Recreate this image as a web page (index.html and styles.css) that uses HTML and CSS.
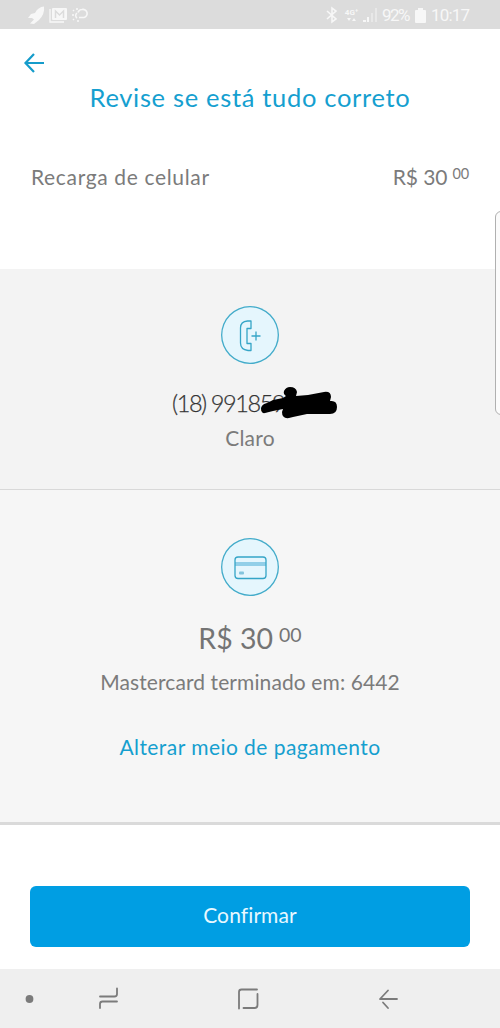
FILE: index.html
```html
<!DOCTYPE html>
<html lang="pt-BR">
<head>
<meta charset="utf-8">
<title>Recarga de celular</title>
<link rel="stylesheet" href="styles.css">
</head>
<body>
<div class="screen">
  <div class="status">
    <svg class="status-left" width="64" height="20" viewBox="0 0 64 20">
      <path d="M16 1.500Q10 2 7 8L3 9 0 13h4l2 1.500-4 4 4 .5 5-4Q17 9 16 1.500Z" fill="currentColor"/>
      <path d="M22 4v13h14" fill="none" stroke="currentColor" stroke-width="1.300"/>
      <rect x="24" y="3" width="15" height="12" rx="1" fill="currentColor"/>
      <path d="M27.500 13V6l4 4 4-4v7" fill="none" stroke="#dcdcdc" stroke-width="1.500"/>
      <path d="M51 12.500h5a4 4 0 1 0-2-8q-3 0-4 3" fill="none" stroke="currentColor" stroke-width="1.600"/>
      <path d="M49 8a3 3 0 0 0 0 5M45 5l1 1M49 3v2M44 10h2M45 15l1-1M50 15v2" fill="none" stroke="currentColor" stroke-width="1.500"/>
    </svg>
    <div class="status-right">
      <svg width="12" height="18" viewBox="0 0 12 18"><path d="M1 5l9 8-4 3V2l4 3-9 8" fill="none" stroke="currentColor" stroke-width="1.600"/></svg>
      <div class="network"><span>4G⁺</span><svg width="9" height="5" viewBox="0 0 9 5"><path d="M0 1h4L2 4ZM5 4h4L7 1Z" fill="currentColor"/></svg></div>
      <svg class="signal" width="14" height="16" viewBox="0 0 14 16"><path d="M0 13h3v2H0ZM4 10h2v5H4Z" fill="currentColor"/><path d="M8 6h2v9H8ZM12 1h2v14h-2Z" fill="currentColor" opacity=".45"/></svg>
      <span class="percent">92%</span>
      <svg class="battery" width="11" height="17" viewBox="0 0 11 17"><path d="M3 1h5v2h2q1 0 1 1v11q0 1-1 1H1q-1 0-1-1V4q0-1 1-1h2Z" fill="currentColor"/></svg>
      <span class="clock">10:17</span>
    </div>
  </div>

  <div class="summary">
    <svg class="back" width="22" height="22" viewBox="0 0 22 22"><path d="M11 2L2.500 11l8.500 9M2.500 11H21" fill="none" stroke="currentColor" stroke-width="2.200"/></svg>
    <h1 class="title">Revise se está tudo correto</h1>
    <div class="line-item">
      <span class="item-name">Recarga de celular</span>
      <span class="item-price">R$ 30<span class="cents">00</span></span>
    </div>
  </div>

  <div class="phone-section">
    <div class="badge">
      <svg width="58" height="58" viewBox="0 0 58 58" fill="none" stroke="currentColor" stroke-width="1.300" stroke-linejoin="round">
        <path d="M30 15H26.500Q19.500 15.500 19.500 22v15Q19.500 43.500 27 44.500h3v-7h-4V22.500h4Z"/>
        <path d="M30.500 30h9M35 25.500v9"/>
      </svg>
    </div>
    <div class="number-row">
      <span class="number">(18) 991859</span>
      <svg class="scribble" width="78" height="33" viewBox="0 0 78 33">
        <path d="M0 21Q1 17 6 16L12 13 22 11 25 9Q22 7 23 4 25 0 29 0q6 0 7 5l-1 4 12-1 16-3q7-1 7 5l-1 4q7-1 7 6 0 7-7 7l-23 0-14 3-4 1q-7 1-7-6l1-3-10 2-8 2Q0 27 0 21Z"/>
      </svg>
    </div>
    <div class="carrier">Claro</div>
  </div>

  <div class="payment-section">
    <div class="badge">
      <svg width="58" height="58" viewBox="0 0 58 58">
        <path d="M14 24h31v4H14Z" fill="#92cfe8"/>
        <rect x="14" y="19" width="31" height="21.500" rx="3" fill="none" stroke="currentColor" stroke-width="1.300"/>
        <rect x="18" y="33.500" width="5" height="3" rx="1" fill="#83c4dd"/>
      </svg>
    </div>
    <div class="amount">R$ 30<span class="amount-cents">00</span></div>
    <div class="card-name">Mastercard terminado em: 6442</div>
    <a class="change">Alterar meio de pagamento</a>
  </div>

  <div class="footer"><button class="confirm">Confirmar</button></div>

  <div class="nav">
    <svg width="500" height="59" viewBox="0 0 500 59" fill="none" stroke="currentColor" stroke-width="1.800" stroke-linecap="round" stroke-linejoin="round">
      <circle cx="29.500" cy="30" r="3.900" fill="currentColor" stroke="none"/>
      <path d="M100 27.500h14.500q2.500 0 2.500-2.500v-5.500M117 32.500h-14.500q-2.500 0-2.500 2.500v4"/>
      <path d="M239 39.500V23q0-2.500 2.500-2.500H257M243.500 39H254.500q3 0 3-3V25"/>
      <path d="M397 30h-17l8-8.500M383 33.500l5 5.500"/>
    </svg>
  </div>
  <div class="edge-handle"></div>
</div>
</body>
</html>
```
FILE: styles.css
```css
* { box-sizing: border-box; }
body { margin: 0; font-family: Lato, "Open Sans", sans-serif; font-variant-ligatures: none; color: #7b7b7b; background: #fff; }
svg { display: block; flex: none; }
.screen { position: relative; width: 500px; height: 1028px; overflow: hidden; display: flex; flex-direction: column; }
.status { height: 29px; flex: none; background: #dcdcdc; color: #f7f7f7; display: flex; justify-content: space-between; padding: 5px 30px 0 28px; }
.status-right { display: flex; height: 20px; align-items: center; font: 17px/20px Roboto, sans-serif; }
.network { width: 17px; margin-left: 5px; display: flex; flex-direction: column; align-items: center; font: bold 8px/9px Roboto, sans-serif; }
.signal { margin-left: 3px; }
.percent { width: 29px; margin-left: 5px; letter-spacing: -1.5px; white-space: nowrap; }
.battery { margin-left: 4px; }
.clock { width: 39px; margin-left: 5px; letter-spacing: -.8px; white-space: nowrap; }
.summary { height: 240px; flex: none; padding: 23px 31px 0; }
.back { margin-left: -8px; color: #159ccb; }
.title { margin: 7px 0 0; text-align: center; font-size: 25.5px; line-height: 32px; font-weight: 400; letter-spacing: .68px; color: #159fd0; white-space: nowrap; }
.line-item { margin-top: 50px; display: flex; justify-content: space-between; font-size: 21px; line-height: 28px; }
.item-name { letter-spacing: .65px; }
.item-price { display: flex; letter-spacing: -.1px; }
.cents { font-size: 14.5px; line-height: 22px; margin-left: 5px; }
.phone-section { height: 221px; flex: none; background: #f3f3f3; border-bottom: 1px solid #d8d8d8; padding-top: 37px; display: flex; flex-direction: column; align-items: center; }
.badge { width: 58px; height: 58px; flex: none; border-radius: 50%; background: #e5f6fd; box-shadow: inset 0 0 0 1.3px #43abc9; color: #35a5c7; }
.number-row { position: relative; width: 156px; height: 32px; margin-top: 23px; font-size: 23.5px; line-height: 32px; color: #333; white-space: nowrap; font-weight: 300; letter-spacing: -1.4px; -webkit-text-stroke: .25px #333; }
.scribble { position: absolute; left: 89px; top: 0; fill: #000; }
.carrier { font-size: 21px; line-height: 28px; margin-top: 5px; letter-spacing: .2px; }
.payment-section { height: 335px; flex: none; background: #f6f6f6; border-bottom: 3px solid #dadada; padding-top: 48px; display: flex; flex-direction: column; align-items: center; }
.amount { display: flex; margin-top: 24px; font-size: 28.5px; line-height: 36px; color: #747474; }
.amount-cents { font-size: 19.5px; line-height: 29px; margin-left: 6px; }
.card-name { margin-top: 12px; font-size: 21px; line-height: 28px; letter-spacing: .1px; white-space: nowrap; }
.change { margin-top: 37px; font-size: 21px; line-height: 28px; letter-spacing: .45px; color: #159fcf; white-space: nowrap; }
.footer { height: 144px; flex: none; padding: 61px 30px 0; }
.confirm { display: block; width: 440px; height: 61px; padding: 0 0 4px; border: 0; border-radius: 6px; background: #009ee3; color: #e8f8ff; font: 21px/28px Lato, sans-serif; font-variant-ligatures: none; letter-spacing: .1px; }
.nav { height: 59px; background: #efefef; color: #7b7b7b; }
.edge-handle { position: absolute; left: 495px; top: 211px; width: 12px; height: 204px; border: 1.5px solid #b0b0b0; border-radius: 6px; background: #fbfbfb; }
```
